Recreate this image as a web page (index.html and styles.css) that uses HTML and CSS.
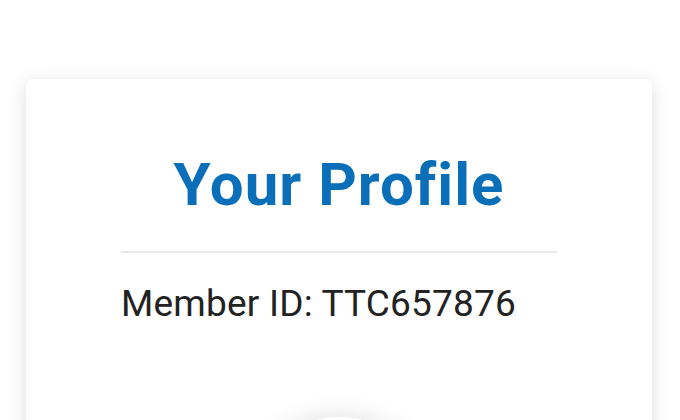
FILE: index.html
```html
<!DOCTYPE html>
<html lang="en">
<head>
    <meta charset="UTF-8">
    <meta name="viewport" content="width=device-width, initial-scale=1.0">
    <title>Your Profile</title>
    <link rel="stylesheet" href="styles.css">
</head>
<body>
    <!-- Profile Card -->
    <div class="page">
        <div class="card">
            <h1 class="title">Your Profile</h1>
            <p class="member-id">Member ID: TTC657876</p>
            <div class="avatar"></div>
        </div>
    </div>
</body>
</html>
```

FILE: styles.css
```css
/* General Styles */
body {
    font-family: Roboto, "Liberation Sans", sans-serif;
    margin: 0;
    padding: 0;
    background-color: #fff;
    color: #222;
}

.page {
    padding: 79px 28px 0 26px;
}

/* Card */
.card {
    background-color: #fff;
    border-radius: 6px;
    box-shadow: 0 3px 18px rgba(0, 0, 0, 0.13);
    padding: 70px 95px 40px;
}

.title {
    margin: 0;
    padding-bottom: 30px;
    border-bottom: 2px solid #e8e8e8;
    text-align: center;
    font-size: 60px;
    font-weight: 700;
    line-height: 1.2;
    letter-spacing: 1px;
    color: #0a6eb9;
}

.member-id {
    margin: 29px 0 0;
    font-size: 37px;
    letter-spacing: 0.2px;
    color: #222;
}

/* Profile picture */
.avatar {
    width: 200px;
    height: 200px;
    margin: 92px auto 0;
    border-radius: 50%;
    background-color: #fff;
    box-shadow: 0 0 26px rgba(0, 0, 0, 0.13);
}
```
